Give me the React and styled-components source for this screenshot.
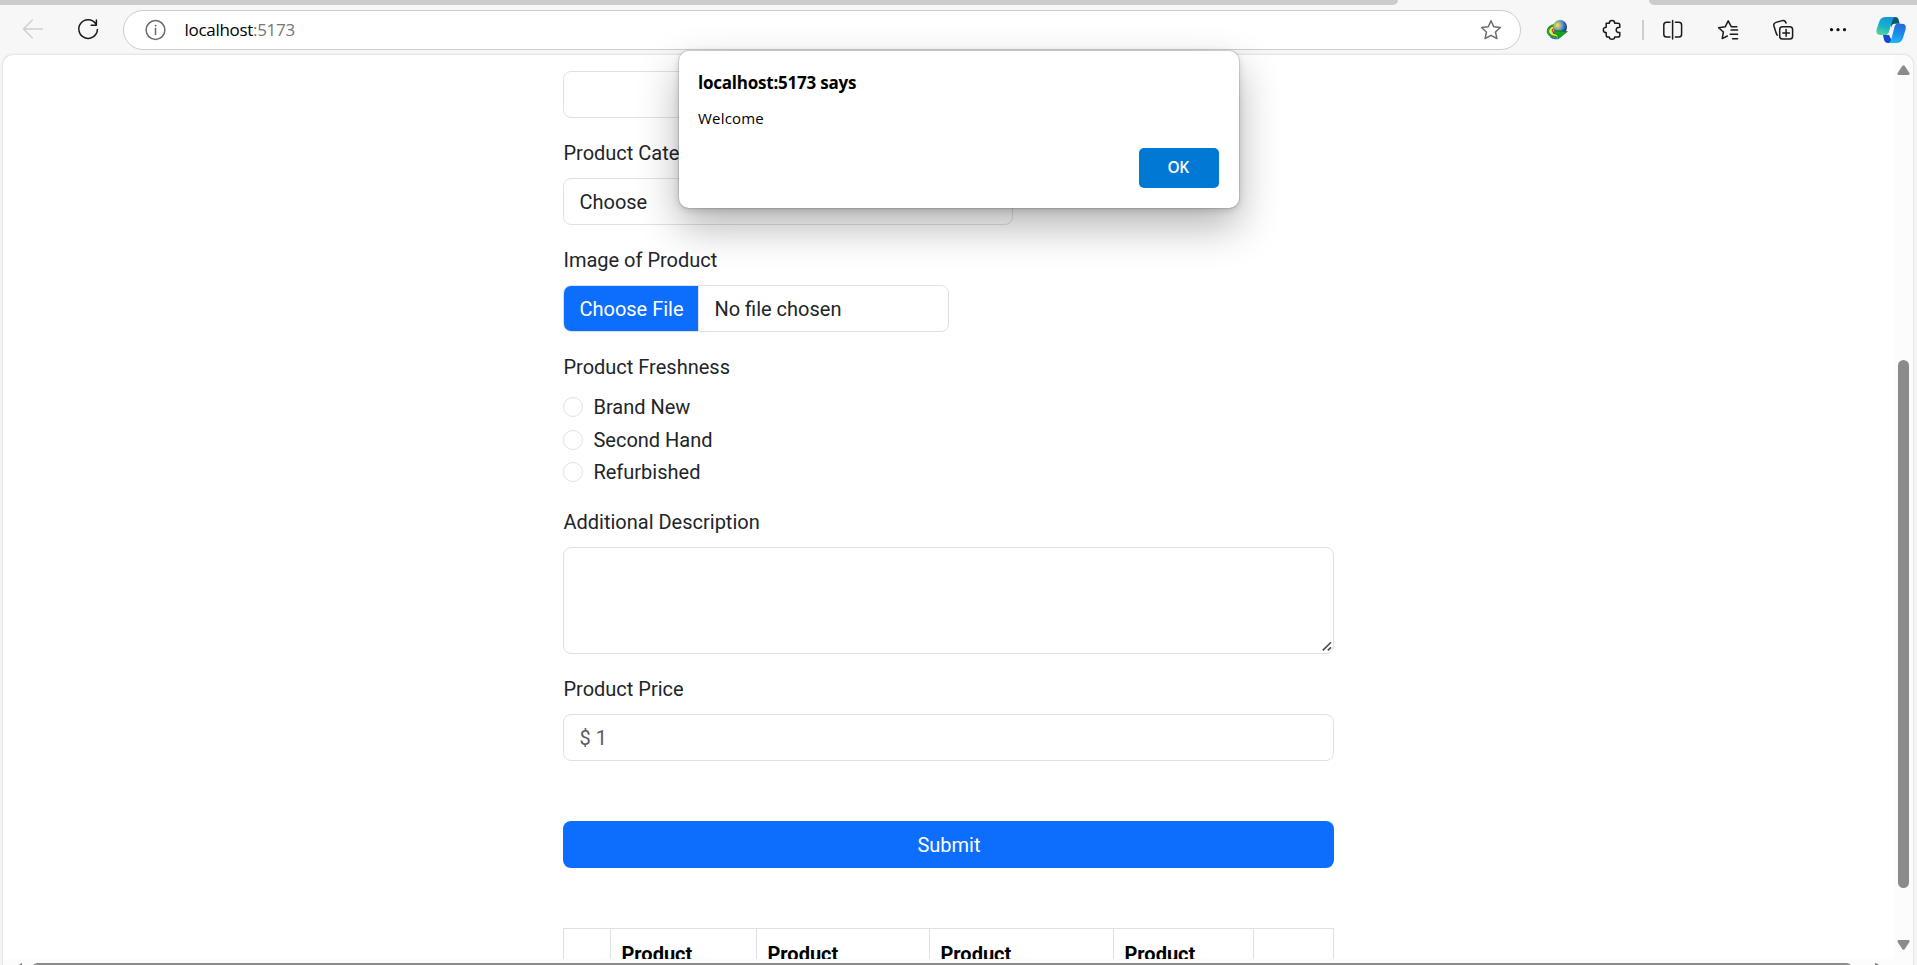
import React from "react";
import styled, { createGlobalStyle } from "styled-components";

const GlobalStyle = createGlobalStyle`
  * { box-sizing: border-box; }
  html, body { margin: 0; padding: 0; overflow: hidden; background: #f7f7f7; }
`;

const ui = `"Open Sans", "Noto Sans", sans-serif`;

const Browser = styled.div`
  position: relative;
  width: 1917px;
  height: 965px;
  overflow: hidden;
  display: flex;
  flex-direction: column;
  background: #f7f7f7;
`;

const TabStrip = styled.div`
  display: flex;
  justify-content: space-between;
  height: 5px;
  flex: none;
`;

const TabEdge = styled.div`
  width: ${(p) => p.$width}px;
  background: #ccc;
  border-radius: ${(p) => (p.$side === "left" ? "0 0 8px 0" : "0 0 0 8px")};
`;

const Toolbar = styled.div`
  display: flex;
  align-items: center;
  gap: 25px;
  height: 50px;
  flex: none;
  padding: 0 11px 0 18px;
`;

const Icon = styled.svg`
  display: block;
  flex: none;
  width: 30px;
  height: 30px;
  fill: none;
  stroke: ${(p) => p.$color || "#1b1b1b"};
  stroke-width: 1.5;
  stroke-linecap: round;
  stroke-linejoin: round;
  margin-left: ${(p) => p.$shift || 0}px;
`;

const AddressBar = styled.div`
  display: flex;
  align-items: center;
  width: 1398px;
  height: 40px;
  margin: 0 -4px 0 -5px;
  padding: 0 14px 0 16px;
  border: 1px solid #cdcdcd;
  border-radius: 20px;
  background: #fff;
`;

const Url = styled.div`
  flex: 1;
  padding-left: 14.5px;
  font: 400 17px/24px ${ui};
  letter-spacing: -0.3px;
  color: #000;
  span { color: #767676; }
`;

const Divider = styled.div`
  width: 2px;
  height: 20px;
  margin: 0 -11px 0 -10px;
  background: #cdcdcd;
`;

const Frame = styled.div`
  display: grid;
  grid-template-columns: 1fr 19px;
  grid-template-rows: 904px 6px;
  width: 1910px;
  height: 910px;
  margin-left: 3px;
  overflow: hidden;
  border-radius: 10px 10px 0 0;
  background: #fff;
  box-shadow: 0 0 2px 1px rgba(0, 0, 0, 0.09);
`;

const Viewport = styled.div`
  overflow: hidden;
  padding: 16px 0 0 560.45px;
  font: 400 20px/30px Roboto, sans-serif;
  color: #212529;
`;

const VTrack = styled.div`
  display: flex;
  flex-direction: column;
  align-items: center;
  background: #fcfcfc;
  padding-top: 10px;
`;

const VThumb = styled.div`
  width: 11px;
  height: 528px;
  margin: 285px 0 52px;
  border-radius: 6px;
  background: #8b8b8b;
`;

const Arrow = styled.svg`
  display: block;
  flex: none;
  fill: #8b8b8b;
`;

const HTrack = styled.div`
  grid-column: 1 / 3;
  display: flex;
  overflow: hidden;
  padding: 4px 0 0 14px;
  background: #fcfcfc;
`;

const HThumb = styled.div`
  width: 1820px;
  height: 11px;
  margin: 0 23px 0 10px;
  flex: none;
  border-radius: 6px;
  background: #8b8b8b;
`;

const Form = styled.form`
  display: flex;
  flex-direction: column;
  width: 771px;
`;

const Field = styled.div`
  display: flex;
  flex-direction: column;
  margin-bottom: ${(p) => p.$after ?? 20}px;
`;

const Label = styled.label`
  height: 30px;
  margin-bottom: 10px;
`;

const Control = styled.div`
  display: flex;
  align-items: center;
  width: ${(p) => p.$width || 771}px;
  height: 47px;
  padding: 0 15px;
  border: 1px solid #dee2e6;
  border-radius: 8px;
  background: #fff;
  color: ${(p) => (p.$muted ? "#595c5f" : "#212529")};
`;

const FileControl = styled(Control)`
  padding: 0;
  overflow: hidden;
`;

const FileButton = styled.span`
  display: flex;
  align-items: center;
  width: 135px;
  height: 45px;
  padding-left: 15px;
  border-right: 1px solid #dee2e6;
  background: #0d6efd;
  color: #fff;
`;

const FileName = styled.span`
  padding-left: 15px;
`;

const RadioRow = styled.label`
  display: flex;
  align-items: center;
  gap: 10px;
  height: 32.5px;
  padding-bottom: 2.5px;
`;

const Radio = styled.span`
  width: 20px;
  height: 20px;
  border: 1px solid #dee2e6;
  border-radius: 50%;
`;

const TextArea = styled.div`
  display: flex;
  align-items: flex-end;
  justify-content: flex-end;
  height: 107px;
  padding: 0 1px 2px 0;
  border: 1px solid #dee2e6;
  border-radius: 8px;
`;

const Submit = styled.button`
  height: 47px;
  margin: 0 0 60px;
  padding: 0;
  border: 0;
  border-radius: 8px;
  background: #0d6efd;
  color: #fff;
  font: inherit;
`;

const TableHead = styled.div`
  display: grid;
  grid-template-columns: 47px 146px 173px 184px 140px 81px;
  width: 771px;
  height: 90px;
  border-top: 1px solid #dee2e6;
  border-right: 1px solid #dee2e6;
`;

const Th = styled.div`
  padding: 10px 10px 0;
  border-left: 1px solid #dee2e6;
  font-weight: 700;
  color: #000;
`;

const Dialog = styled.div`
  position: absolute;
  left: 679px;
  top: 51px;
  width: 560px;
  height: 157px;
  display: flex;
  flex-direction: column;
  padding: 19px 20px 20px 19px;
  border-radius: 10px;
  background: #fff;
  color: #000;
  font-family: ${ui};
  box-shadow: 0 0 0 1px rgba(0, 0, 0, 0.1), 0 2px 7px rgba(0, 0, 0, 0.16),
    0 18px 42px rgba(0, 0, 0, 0.3);
`;

const DialogTitle = styled.div`
  font-size: 17px;
  line-height: 26px;
  font-weight: 700;
  letter-spacing: -0.22px;
`;

const DialogText = styled.div`
  margin-top: 10px;
  font-size: 15px;
  line-height: 24px;
  letter-spacing: 0.2px;
`;

const DialogButton = styled.button`
  align-self: flex-end;
  width: 80px;
  height: 40px;
  margin-top: auto;
  padding: 0 2px 2px 0;
  border: 0;
  border-radius: 5px;
  background: #0078d4;
  color: #fff;
  font: 600 15.5px/20px ${ui};
  letter-spacing: -0.5px;
`;

const STAR = "M15 5.8 L17.7 11.8 L24.4 12.5 L19.5 17 L20.9 23.6 L15 20.3 L9.1 23.6 L10.5 17 L5.6 12.5 L12.3 11.8 Z";

const IdmIcon = () => (
  <Icon viewBox="0 0 30 30">
    <defs>
      <radialGradient id="globe" cx="32%" cy="38%" r="70%">
        <stop offset="0" stopColor="#efe27a" />
        <stop offset="0.35" stopColor="#a3b36a" />
        <stop offset="0.55" stopColor="#4f8fe6" />
        <stop offset="1" stopColor="#10306e" />
      </radialGradient>
    </defs>
    <g fill="none" strokeWidth="1.7" strokeLinecap="butt">
      <path d="M8.5 21.6 Q11 24 15 23.4" stroke="#3d62dd" />
      <path d="M12.5 10.2 C5.4 11.6 3.8 17.5 9.4 20.9 L15 22" stroke="#1f9e2b" strokeWidth="2.5" />
      <path d="M13 12 C8.2 12.8 7 16.8 10.8 19.4 L16 20.4" stroke="#f6e936" />
      <path d="M13.5 13.2 C9.8 13.6 9.2 16.2 12 18 L17 18.6" stroke="#ea3b25" strokeWidth="1.5" />
    </g>
    <circle cx="18" cy="12" r="7" fill="url(#globe)" stroke="none" />
    <path d="M12.5 15.6 L25.4 16.6 L15.8 24.2 L15.8 20 L11.8 18.4 Z" fill="#10a51a" stroke="#0a5a12" strokeWidth="0.6" />
  </Icon>
);

const CopilotIcon = () => (
  <Icon viewBox="0 0 30 30" $shift={-2}>
    <defs>
      <linearGradient id="cpLeft" x1="0.5" y1="0" x2="0.2" y2="1">
        <stop offset="0" stopColor="#1199dc" />
        <stop offset="0.5" stopColor="#18b2c8" />
        <stop offset="1" stopColor="#5bd59b" />
      </linearGradient>
      <linearGradient id="cpRight" x1="0.7" y1="0" x2="0.4" y2="1">
        <stop offset="0" stopColor="#2a68dc" />
        <stop offset="0.5" stopColor="#198ce8" />
        <stop offset="1" stopColor="#20b6fa" />
      </linearGradient>
    </defs>
    <g stroke="none">
      <path d="M15 2 H19.5 C22.5 2 22.7 5 23.8 8.8 H19 C16.5 8.8 15.8 10 15 13 Z" fill="#0b5876" />
      <path d="M7 20 H13 L16 26 C15 28 13.5 28 12 28 C8.5 28 8 25 7 20 Z" fill="#1746cf" />
      <path d="M10 2 H19.5 C17.4 2 16.7 4.4 16 6.7 L13 16.4 C12.2 19 11 20.1 8.6 20.1 H4.3 C0.6 20.1 -0.2 17.4 0.8 13.7 L3.4 6.2 C4.6 3 6.6 2 10 2 Z" fill="url(#cpLeft)" />
      <path d="M21.5 8.8 H25.8 C29.6 8.8 30.5 11.5 29.4 15 L27 23 C25.8 26.5 23.8 28 20.5 28 H12 C13.9 28 14.6 26.2 15.3 24 L18.2 13 C18.9 10.2 19.8 8.8 21.5 8.8 Z" fill="url(#cpRight)" />
    </g>
  </Icon>
);

const columns = ["", "Product", "Product", "Product", "Product", ""];
const freshness = ["Brand New", "Second Hand", "Refurbished"];

export default function App() {
  return (
    <Browser>
      <GlobalStyle />
      <TabStrip>
        <TabEdge $width={1398} $side="left" />
        <TabEdge $width={268} $side="right" />
      </TabStrip>
      <Toolbar>
        <Icon viewBox="0 0 30 30" $color="#cfcfcf">
          <path d="M24.5 14 H5.5 M14.2 5.3 L5.5 14 L14.2 22.7" />
        </Icon>
        <Icon viewBox="0 0 30 30">
          <path d="M22.8 8.8 A9.3 9.3 0 1 0 24.4 14.6 M23.4 5 V10.2 H18.2" />
        </Icon>
        <AddressBar>
          <Icon viewBox="0 0 30 30" $color="#6b6b6b">
            <circle cx="15.5" cy="15" r="9.4" />
            <path d="M15.5 13.6 V19.4" />
            <circle cx="15.5" cy="10.7" r="0.5" fill="#6b6b6b" strokeWidth="0.8" />
          </Icon>
          <Url>localhost<span>:5173</span></Url>
          <Icon viewBox="0 0 30 30" $color="#6b6b6b">
            <path d={STAR} />
          </Icon>
        </AddressBar>
        <IdmIcon />
        <Icon viewBox="0 0 30 30">
          <path d="M9.2 8.2 H12.3 C12.3 4.6 17.7 4.6 17.7 8.2 H21 Q22.8 8.2 22.8 10 V12.2 C18 12.2 18 17.6 22.8 17.6 V20.2 Q22.8 22 21 22 H17.7 C17.7 25 12.3 25 12.3 22 H11 Q9.2 22 9.2 20.2 V17.6 C5.4 17.6 5.4 12.2 9.2 12.2 Z" />
        </Icon>
        <Divider />
        <Icon viewBox="0 0 30 30">
          <path d="M12 7.2 H8.6 Q5.8 7.2 5.8 10 V19.3 Q5.8 22.1 8.6 22.1 H12 M17.4 7.2 H20.8 Q23.6 7.2 23.6 10 V19.3 Q23.6 22.1 20.8 22.1 H17.4 M14.6 5.4 V24" />
        </Icon>
        <Icon viewBox="0 0 30 30">
          <path d="M23.8 11.8 H18.4 L15.2 5.8 L12.2 11.8 L5.6 12.7 L10.4 17 L9.2 23.6 L14.3 21 M18 14.9 H24.6 M17.2 19.3 H24.6 M19.6 23.7 H24.6" />
        </Icon>
        <Icon viewBox="0 0 30 30">
          <rect x="11.7" y="11.7" width="12.9" height="12.4" rx="2.8" />
          <path d="M18.1 14.6 V21.2 M14.8 17.9 H21.4 M9.2 20.2 C7.9 18 7 14.5 5.9 10.8 Q5.2 8.2 8 7.4 L14.5 5.6 Q17.2 5 18 8" />
        </Icon>
        <Icon viewBox="0 0 30 30">
          <g fill="#111" stroke="none">
            <circle cx="8.5" cy="14.7" r="1.6" />
            <circle cx="15" cy="14.7" r="1.6" />
            <circle cx="21.5" cy="14.7" r="1.6" />
          </g>
        </Icon>
        <CopilotIcon />
      </Toolbar>

      <Frame>
        <Viewport>
          <Form>
            <Field>
              <Control $width={450} />
            </Field>
            <Field>
              <Label>Product Category</Label>
              <Control $width={450}>Choose</Control>
            </Field>
            <Field>
              <Label>Image of Product</Label>
              <FileControl $width={386}>
                <FileButton>Choose File</FileButton>
                <FileName>No file chosen</FileName>
              </FileControl>
            </Field>
            <Field $after={17.5}>
              <Label>Product Freshness</Label>
              {freshness.map((name) => (
                <RadioRow key={name}>
                  <Radio />
                  {name}
                </RadioRow>
              ))}
            </Field>
            <Field>
              <Label>Additional Description</Label>
              <TextArea>
                <Arrow width="10" height="10" viewBox="0 0 10 10">
                  <path d="M0.8 9.4 L9 1.2 M5.8 9.4 L9 6.4" stroke="#4a4a4a" strokeWidth="1.6" />
                </Arrow>
              </TextArea>
            </Field>
            <Field $after={60}>
              <Label>Product Price</Label>
              <Control $muted>$ 1</Control>
            </Field>
            <Submit type="button">Submit</Submit>
          </Form>
          <TableHead>
            {columns.map((name, i) => (
              <Th key={i}>{name}</Th>
            ))}
          </TableHead>
        </Viewport>
        <VTrack>
          <Arrow width="13" height="10" viewBox="0 0 13 10">
            <path d="M5.4 0.8 Q6.5 -0.5 7.6 0.8 L12.4 8 Q13 10 11.4 10 H1.6 Q0 10 0.6 8 Z" />
          </Arrow>
          <VThumb />
          <Arrow width="13" height="10" viewBox="0 0 13 10">
            <path d="M5.4 9.2 Q6.5 10.5 7.6 9.2 L12.4 2 Q13 0 11.4 0 H1.6 Q0 0 0.6 2 Z" />
          </Arrow>
        </VTrack>
        <HTrack>
          <Arrow width="5" height="10" viewBox="0 0 5 10">
            <path d="M5 0 Q4 -0.5 0 4 V10 H5 Z" />
          </Arrow>
          <HThumb />
          <Arrow width="6" height="10" viewBox="0 0 6 10">
            <path d="M0 0 Q2 -0.5 6 4 V10 H0 Z" />
          </Arrow>
        </HTrack>
      </Frame>

      <Dialog>
        <DialogTitle>localhost:5173 says</DialogTitle>
        <DialogText>Welcome</DialogText>
        <DialogButton type="button">OK</DialogButton>
      </Dialog>
    </Browser>
  );
}
